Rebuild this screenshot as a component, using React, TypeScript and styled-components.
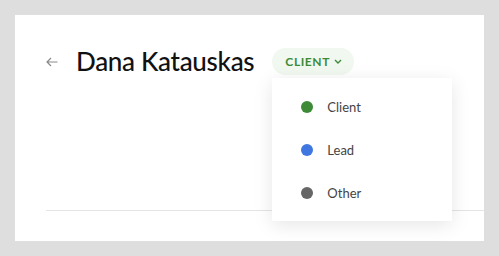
import React from 'react';
import styled, { createGlobalStyle } from 'styled-components';

const GlobalStyle = createGlobalStyle`
  html, body {
    margin: 0;
    padding: 0;
    background: #dedede;
  }
  body {
    font-family: Lato, "Open Sans", sans-serif;
  }
`;

const Page = styled.div`
  padding: 15px;
  box-sizing: border-box;
  height: 256px;
`;

const Card = styled.div`
  background: #ffffff;
  height: 226px;
  padding-top: 33px;
  box-sizing: border-box;
`;

const Header = styled.div`
  display: flex;
  align-items: center;
  height: 27px;
  padding-left: 31px;
`;

const BackButton = styled.button`
  display: flex;
  align-items: center;
  justify-content: center;
  width: 12px;
  height: 27px;
  padding: 0;
  border: none;
  background: none;
  color: #8a8a8a;
  cursor: pointer;
`;

const Title = styled.h1`
  margin: 0 0 0 18px;
  font-family: Lato, sans-serif;
  font-size: 26px;
  font-weight: 500;
  letter-spacing: -0.3px;
  color: #111;
  line-height: 27px;
`;

const StatusWrap = styled.div`
  position: relative;
  margin-left: 18px;
`;

const StatusPill = styled.button`
  display: flex;
  align-items: center;
  gap: 4px;
  height: 27px;
  padding: 0 12px 0 13px;
  border: none;
  border-radius: 14px;
  background: #f1f8ef;
  color: #3d8b37;
  font-family: Lato, sans-serif;
  font-size: 12px;
  font-weight: 700;
  letter-spacing: 0.6px;
  cursor: pointer;
`;

const Menu = styled.ul`
  position: absolute;
  top: 30px;
  left: 0;
  width: 180px;
  margin: 0;
  padding: 7px 0;
  list-style: none;
  background: #ffffff;
  box-shadow: 0 4px 18px rgba(0, 0, 0, 0.1);
  z-index: 2;
`;

const MenuItem = styled.li`
  display: flex;
  align-items: center;
  height: 43px;
  padding-left: 29px;
  font-size: 13px;
  color: #444;
  cursor: pointer;
`;

const Dot = styled.span<{ color: string }>`
  width: 12px;
  height: 12px;
  border-radius: 50%;
  background: ${props => props.color};
  margin-right: 14px;
`;

const Divider = styled.hr`
  margin: 135px 0 0 31px;
  border: none;
  border-top: 1px solid #e4e4e4;
`;

const options = [
  { label: 'Client', color: '#3d8b37' },
  { label: 'Lead', color: '#3f76e0' },
  { label: 'Other', color: '#666666' },
];

export default function App() {
  return (
    <Page>
      <GlobalStyle />
      <Card>
        <Header>
          <BackButton aria-label="Back">
            <svg width="12" height="10" viewBox="0 0 12 10" fill="none" stroke="currentColor" strokeWidth="1.2">
              <path d="M11.5 5H1M5 1L1 5l4 4" />
            </svg>
          </BackButton>
          <Title>Dana Katauskas</Title>
          <StatusWrap>
            <StatusPill>
              CLIENT
              <svg width="8" height="5" viewBox="0 0 8 5" fill="none" stroke="currentColor" strokeWidth="1.4">
                <path d="M1 1l3 3 3-3" />
              </svg>
            </StatusPill>
            <Menu>
              {options.map(o => (
                <MenuItem key={o.label}>
                  <Dot color={o.color} />
                  {o.label}
                </MenuItem>
              ))}
            </Menu>
          </StatusWrap>
        </Header>
        <Divider />
      </Card>
    </Page>
  );
}
